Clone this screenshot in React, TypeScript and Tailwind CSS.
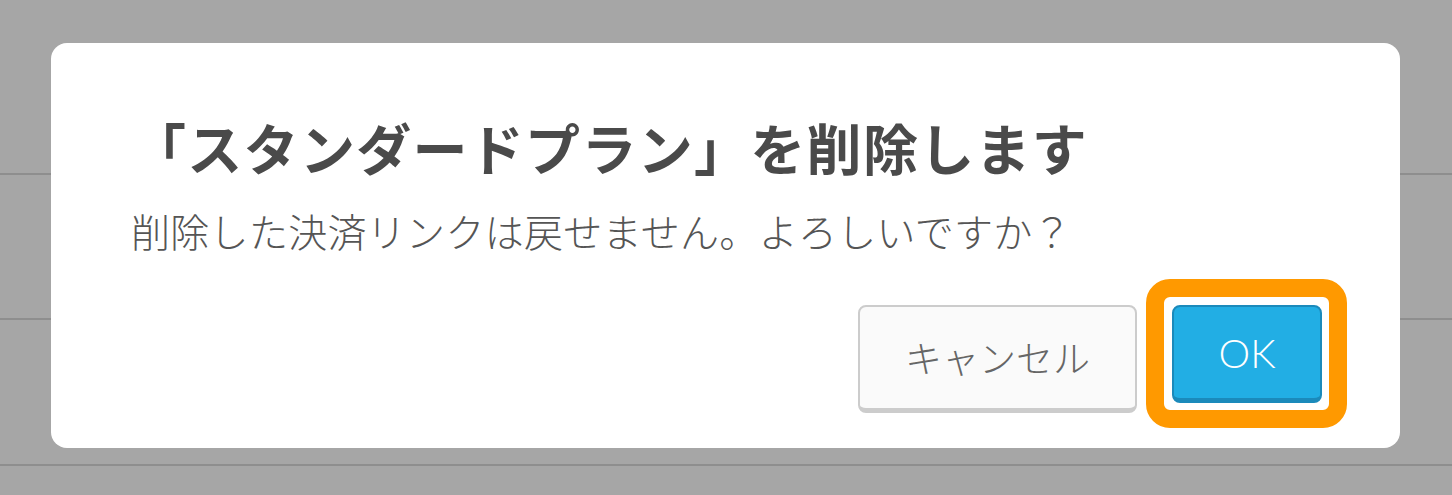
import React from 'react'

const font = '"Noto Sans CJK JP", "Noto Sans", sans-serif'

export default function App() {
  return (
    <div className="relative w-[1452px] h-[495px] overflow-hidden bg-[#a6a6a6]" style={{ fontFamily: font }}>
      {/* rows of the page behind the modal */}
      <div className="flex flex-col">
        <div className="h-[175px] border-b-2 border-[#8e8e8e]" />
        <div className="h-[145px] border-b-2 border-[#8e8e8e]" />
        <div className="h-[146px] border-b-2 border-[#8e8e8e]" />
      </div>

      <div className="absolute left-[51px] top-[43px] w-[1349px] h-[405px] bg-white rounded-[16px] pl-[80px] pr-[78px] pt-[70px]">
        <h1 className="text-[55px] leading-[66px] font-bold text-[#4a4a4a] tracking-[1.3px]">
          「スタンダードプラン」を削除します
        </h1>
        <p className="mt-[26px] text-[39px] leading-[50px] font-light text-[#555555] tracking-[0.3px]">
          削除した決済リンクは戻せません。よろしいですか？
        </p>

        <div className="flex justify-end items-start gap-[35px] mt-[50px]">
          <button className="w-[279px] h-[108px] rounded-[8px] border-2 border-b-[5px] border-[#cccccc] bg-[#fafafa] text-[37px] font-light text-[#666666]">
            キャンセル
          </button>
          <div className="relative">
            <button className="w-[150px] h-[98px] rounded-[8px] border-2 border-b-[5px] border-[#1b8abb] bg-[#22aee4] text-[40px] font-light text-white" style={{ fontFamily: 'Lato, "Noto Sans", sans-serif' }}>
              OK
            </button>
            <span className="absolute -left-[26px] -right-[25px] -top-[26px] -bottom-[25px] border-[18px] border-[#ff9900] rounded-[24px] pointer-events-none" />
          </div>
        </div>
      </div>
    </div>
  )
}
